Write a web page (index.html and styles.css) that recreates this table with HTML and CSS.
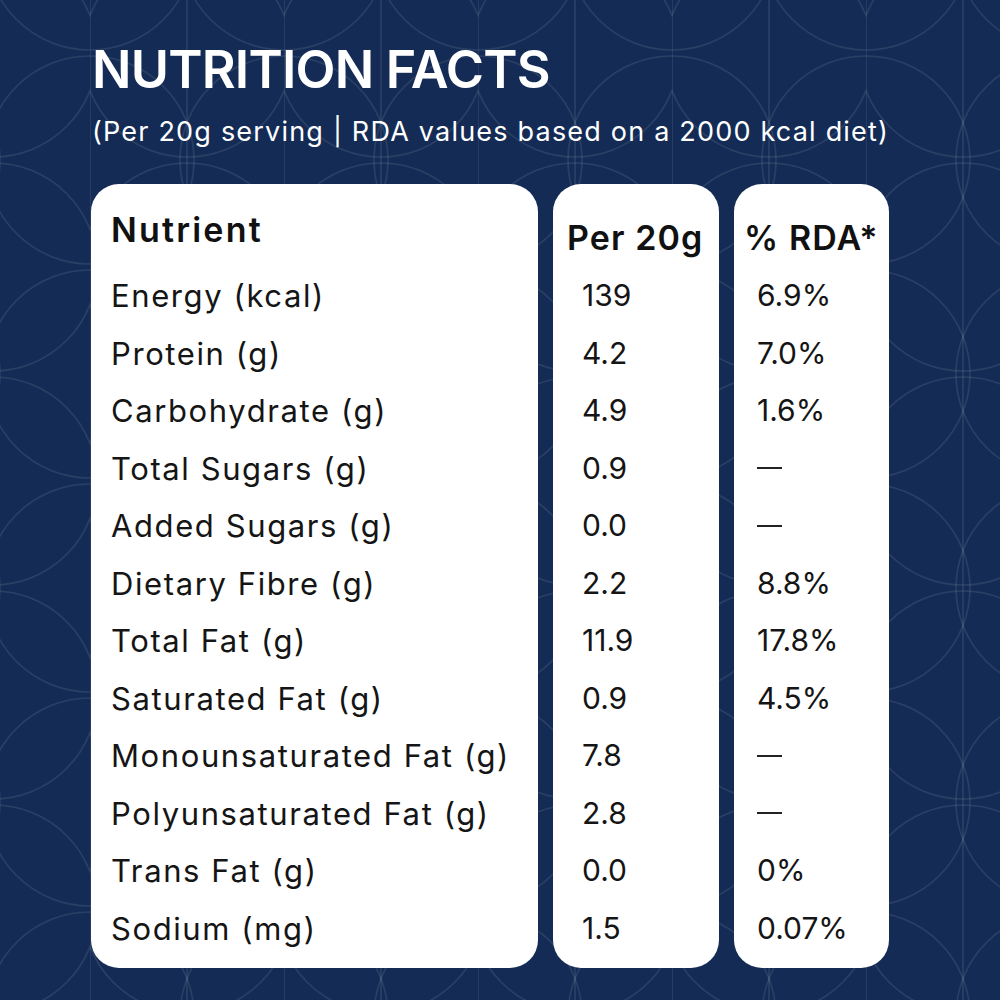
FILE: index.html
```html
<!DOCTYPE html>
<html lang="en">
<head>
<meta charset="utf-8">
<title>Nutrition Facts</title>
<link rel="stylesheet" href="styles.css">
</head>
<body>
<main class="page">
  <h1 class="title">NUTRITION FACTS</h1>
  <p class="subtitle">(Per 20g serving | RDA values based on a 2000 kcal diet)</p>
  <section class="table">
    <div class="card card-nutrient">
      <div class="head head-nutrient">Nutrient</div>
      <div class="row">Energy (kcal)</div>
      <div class="row">Protein (g)</div>
      <div class="row">Carbohydrate (g)</div>
      <div class="row">Total Sugars (g)</div>
      <div class="row">Added Sugars (g)</div>
      <div class="row">Dietary Fibre (g)</div>
      <div class="row">Total Fat (g)</div>
      <div class="row">Saturated Fat (g)</div>
      <div class="row">Monounsaturated Fat (g)</div>
      <div class="row">Polyunsaturated Fat (g)</div>
      <div class="row">Trans Fat (g)</div>
      <div class="row">Sodium (mg)</div>
    </div>
    <div class="card card-per">
      <div class="head head-col">Per 20g</div>
      <div class="row num">139</div>
      <div class="row num">4.2</div>
      <div class="row num">4.9</div>
      <div class="row num">0.9</div>
      <div class="row num">0.0</div>
      <div class="row num">2.2</div>
      <div class="row num">11.9</div>
      <div class="row num">0.9</div>
      <div class="row num">7.8</div>
      <div class="row num">2.8</div>
      <div class="row num">0.0</div>
      <div class="row num">1.5</div>
    </div>
    <div class="card card-rda">
      <div class="head head-col">% RDA*</div>
      <div class="row num">6.9%</div>
      <div class="row num">7.0%</div>
      <div class="row num">1.6%</div>
      <div class="row num"><span class="dash"></span></div>
      <div class="row num"><span class="dash"></span></div>
      <div class="row num">8.8%</div>
      <div class="row num">17.8%</div>
      <div class="row num">4.5%</div>
      <div class="row num"><span class="dash"></span></div>
      <div class="row num"><span class="dash"></span></div>
      <div class="row num">0%</div>
      <div class="row num">0.07%</div>
    </div>
  </section>
</main>
</body>
</html>
```
FILE: styles.css
```css
html, body {
  margin: 0;
  padding: 0;
}
body {
  width: 1000px;
  height: 1000px;
  overflow: hidden;
  background-color: #142c55;
  background-image: url("data:image/svg+xml,%3Csvg xmlns='http://www.w3.org/2000/svg' width='194' height='214' viewBox='0 0 194 214'%3E%3Cg fill='none' stroke='%23ffffff' stroke-opacity='0.09' stroke-width='1.6'%3E%3Ccircle cx='0' cy='0' r='104'/%3E%3Ccircle cx='194' cy='0' r='104'/%3E%3Ccircle cx='0' cy='214' r='104'/%3E%3Ccircle cx='194' cy='214' r='104'/%3E%3Ccircle cx='97' cy='107' r='104'/%3E%3Cline x1='97' y1='0' x2='97' y2='214'/%3E%3Cline x1='0' y1='0' x2='0' y2='214'/%3E%3C/g%3E%3C/svg%3E");
  background-position: 90px -54px;
  font-family: Inter, "Noto Sans", sans-serif;
  color: #111;
}
.page {
  padding: 44px 0 0 92px;
  box-sizing: border-box;
}
.title {
  margin: 0;
  font-size: 52px;
  line-height: 52px;
  font-weight: 600;
  color: #fff;
  letter-spacing: -0.8px;
}
.subtitle {
  margin: 22px 0 0 0;
  font-size: 27px;
  line-height: 27px;
  font-weight: 400;
  color: #fff;
  letter-spacing: 1.2px;
}
.table {
  display: flex;
  gap: 15px;
  margin-top: 39px;
  margin-left: -1px;
}
.card {
  background: #fff;
  border-radius: 28px;
  display: flex;
  flex-direction: column;
  padding-bottom: 11px;
  box-sizing: border-box;
}
.card-nutrient {
  width: 447px;
  padding-left: 20px;
}
.card-per {
  width: 166px;
  padding-left: 29px;
}
.card-rda {
  width: 155px;
  padding-left: 23px;
}
.head {
  height: 83px;
  box-sizing: border-box;
  font-size: 34px;
  line-height: 34px;
  font-weight: 600;
  color: #111;
}
.head-nutrient {
  padding-top: 29px;
  letter-spacing: 2.2px;
}
.head-col {
  padding-top: 37px;
  margin-left: -15px;
  letter-spacing: 1.1px;
}
.card-rda .head-col {
  margin-left: -13px;
}
.row {
  height: 57.5px;
  line-height: 57.5px;
  font-size: 31px;
  font-weight: 400;
  color: #151515;
  white-space: nowrap;
  letter-spacing: 1.6px;
}
.row.num {
  font-size: 30px;
  letter-spacing: 0;
}
.dash {
  display: inline-block;
  width: 25px;
  height: 2px;
  background: #222;
  vertical-align: middle;
  margin-top: -4px;
}
```
